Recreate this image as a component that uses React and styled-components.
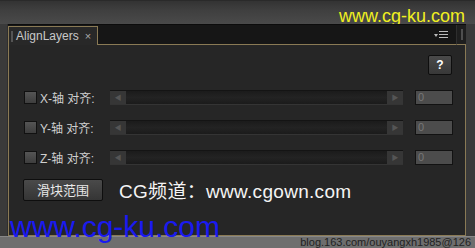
import React from "react";
import styled, { createGlobalStyle } from "styled-components";

const GlobalStyle = createGlobalStyle`
  html, body {
    margin: 0;
    padding: 0;
    background: #3c3c3c;
  }
  body {
    font-family: "Liberation Sans", "Noto Sans CJK SC", sans-serif;
  }
`;

const Frame = styled.div`
  position: relative;
  width: 475px;
  height: 248px;
  overflow: hidden;
  display: flex;
  flex-direction: column;
  background: #3c3c3c;
`;

const TitleBar = styled.div`
  height: 24px;
  flex: none;
  display: flex;
  justify-content: flex-end;
  align-items: center;
  padding-right: 10px;
  background: linear-gradient(#333 0%, #3f3f3f 40%, #4a4a4a 100%);
  border-top: 1px solid #2a2a2a;
  box-sizing: border-box;
`;

const YellowMark = styled.span`
  font-family: "Liberation Sans", sans-serif;
  font-size: 18px;
  color: #f0f020;
  line-height: 1;
  margin-top: 6px;
`;

const Middle = styled.div`
  flex: 1;
  display: flex;
  min-height: 0;
`;

const SideGutter = styled.div`
  width: ${(p) => p.$w}px;
  flex: none;
  background: #3a3a3a;
  border-right: ${(p) => (p.$line ? "1px solid #2e2e2e" : "none")};
  box-sizing: border-box;
`;

const Panel = styled.div`
  flex: 1;
  display: flex;
  flex-direction: column;
  min-width: 0;
`;

const TabBar = styled.div`
  height: 21px;
  flex: none;
  display: flex;
  align-items: flex-end;
  background: #161616;
  border-top: 1px solid #0c0c0c;
  box-sizing: border-box;
`;

const Tab = styled.div`
  height: 19px;
  display: flex;
  align-items: center;
  gap: 3px;
  padding: 0 6px 0 2px;
  background: #282828;
  border: 1px solid #8a7a55;
  border-bottom: none;
  box-sizing: border-box;
  color: #c9c9c9;
  font-size: 12px;
`;

const Grip = styled.span`
  width: 2px;
  height: 11px;
  background-image: radial-gradient(#888 0.6px, transparent 0.8px);
  background-size: 2px 2px;
`;

const Close = styled.span`
  color: #aaa;
  font-size: 11px;
  margin-left: 3px;
`;

const TabFill = styled.div`
  flex: 1;
  height: 100%;
  display: flex;
  align-items: center;
  justify-content: flex-end;
  padding-right: 8px;
  border-bottom: 1px solid #8a7a55;
  box-sizing: border-box;
`;

const GripStrip = styled.div`
  width: 10px;
  height: 100%;
  flex: none;
  display: flex;
  justify-content: center;
  align-items: center;
  background: #1e1e1e;
  border-left: 1px solid #2e2e2e;
  border-bottom: 1px solid #8a7a55;
  box-sizing: border-box;
`;

const Content = styled.div`
  flex: 1;
  background: #262626;
  border-left: 1px solid #8a7a55;
  border-right: 1px solid #8a7a55;
  border-bottom: 1px solid #8a7a55;
  box-sizing: border-box;
  padding: 10px 13px 0 14px;
  display: flex;
  flex-direction: column;
`;

const HelpRow = styled.div`
  display: flex;
  justify-content: flex-end;
  margin-bottom: 7px;
`;

const SmallButton = styled.button`
  width: 24px;
  height: 20px;
  padding: 0;
  border: 1px solid #0e0e0e;
  border-radius: 2px;
  background: linear-gradient(#4a4a4a, #383838);
  color: #fff;
  font-family: "Liberation Sans", sans-serif;
  font-weight: bold;
  font-size: 12px;
`;

const Row = styled.div`
  height: 30px;
  display: flex;
  align-items: center;
`;

const Check = styled.span`
  width: 11px;
  height: 11px;
  flex: none;
  margin-left: 1px;
  background: linear-gradient(#555, #3e3e3e);
  border: 1px solid #111;
`;

const Label = styled.span`
  width: 70px;
  flex: none;
  margin-left: 3px;
  color: #cfcfcf;
  font-size: 12px;
  font-family: "Liberation Sans", "Noto Sans CJK SC", sans-serif;
`;

const Slider = styled.div`
  width: 293px;
  height: 15px;
  flex: none;
  display: flex;
  background: #1d1d1d;
  border-top: 1px solid #141414;
  border-bottom: 1px solid #343434;
  box-sizing: border-box;
`;

const Track = styled.div`
  flex: 1;
  background: linear-gradient(#1b1b1b 0%, #232323 50%, #1b1b1b 100%);
`;

const ArrowBtn = styled.div`
  width: 16px;
  height: 100%;
  flex: none;
  display: flex;
  align-items: center;
  justify-content: center;
  background: #363636;
  color: #555;
  font-size: 7px;
`;

const NumBox = styled.div`
  width: 38px;
  height: 15px;
  flex: none;
  margin-left: 12px;
  background: #4c4c4c;
  border: 1px solid #121212;
  box-sizing: border-box;
  color: #777;
  font-size: 11px;
  line-height: 13px;
  padding-left: 2px;
`;

const BottomRow = styled.div`
  display: flex;
  align-items: center;
  margin-top: 4px;
`;

const RangeButton = styled.button`
  width: 80px;
  height: 22px;
  padding: 0;
  border: 1px solid #0e0e0e;
  border-radius: 2px;
  background: linear-gradient(#4a4a4a, #353535);
  color: #e8e8e8;
  font-family: "Noto Sans CJK SC", sans-serif;
  font-size: 13px;
`;

const Promo = styled.span`
  margin-left: 16px;
  color: #f4f4f4;
  font-size: 19px;
  font-family: "Liberation Sans", "Noto Sans CJK SC", sans-serif;
  letter-spacing: 0.3px;
`;

const BottomStrip = styled.div`
  height: 12px;
  flex: none;
  display: flex;
  justify-content: flex-end;
  align-items: flex-start;
  padding-right: 4px;
  background: #6e6e6e;
  border-top: 1px solid #888;
  box-sizing: border-box;
  overflow: hidden;
`;

const BlogMark = styled.span`
  font-size: 11px;
  line-height: 11px;
  color: #222;
`;

const BlueMark = styled.span`
  position: absolute;
  left: 10px;
  top: 212px;
  font-family: "Liberation Sans", sans-serif;
  font-size: 30px;
  color: #1a1af0;
  line-height: 1;
`;

const MenuIcon = () => (
  <svg width="14" height="8" viewBox="0 0 14 8">
    <path d="M0 3 L4 3 L2 6 Z" fill="#bbb" />
    <rect x="5" y="0" width="9" height="1" fill="#bbb" />
    <rect x="5" y="3" width="9" height="1" fill="#bbb" />
    <rect x="5" y="6" width="9" height="1" fill="#bbb" />
  </svg>
);

const axes = ["X", "Y", "Z"];

export default function App() {
  return (
    <>
      <GlobalStyle />
      <Frame>
        <TitleBar>
          <YellowMark>www.cg-ku.com</YellowMark>
        </TitleBar>
        <Middle>
          <SideGutter $w={8} $line />
          <Panel>
            <TabBar>
              <Tab>
                <Grip />
                <span>AlignLayers</span>
                <Close>×</Close>
              </Tab>
              <TabFill>
                <MenuIcon />
              </TabFill>
              <GripStrip>
                <Grip />
              </GripStrip>
            </TabBar>
            <Content>
              <HelpRow>
                <SmallButton>?</SmallButton>
              </HelpRow>
              {axes.map((a) => (
                <Row key={a}>
                  <Check />
                  <Label>{a}-轴 对齐:</Label>
                  <Slider>
                    <ArrowBtn>◀</ArrowBtn>
                    <Track />
                    <ArrowBtn>▶</ArrowBtn>
                  </Slider>
                  <NumBox>0</NumBox>
                </Row>
              ))}
              <BottomRow>
                <RangeButton>滑块范围</RangeButton>
                <Promo>CG频道：www.cgown.com</Promo>
              </BottomRow>
            </Content>
          </Panel>
          <SideGutter $w={9} />
        </Middle>
        <BottomStrip>
          <BlogMark>blog.163.com/ouyangxh1985@126</BlogMark>
        </BottomStrip>
        <BlueMark>www.cg-ku.com</BlueMark>
      </Frame>
    </>
  );
}
